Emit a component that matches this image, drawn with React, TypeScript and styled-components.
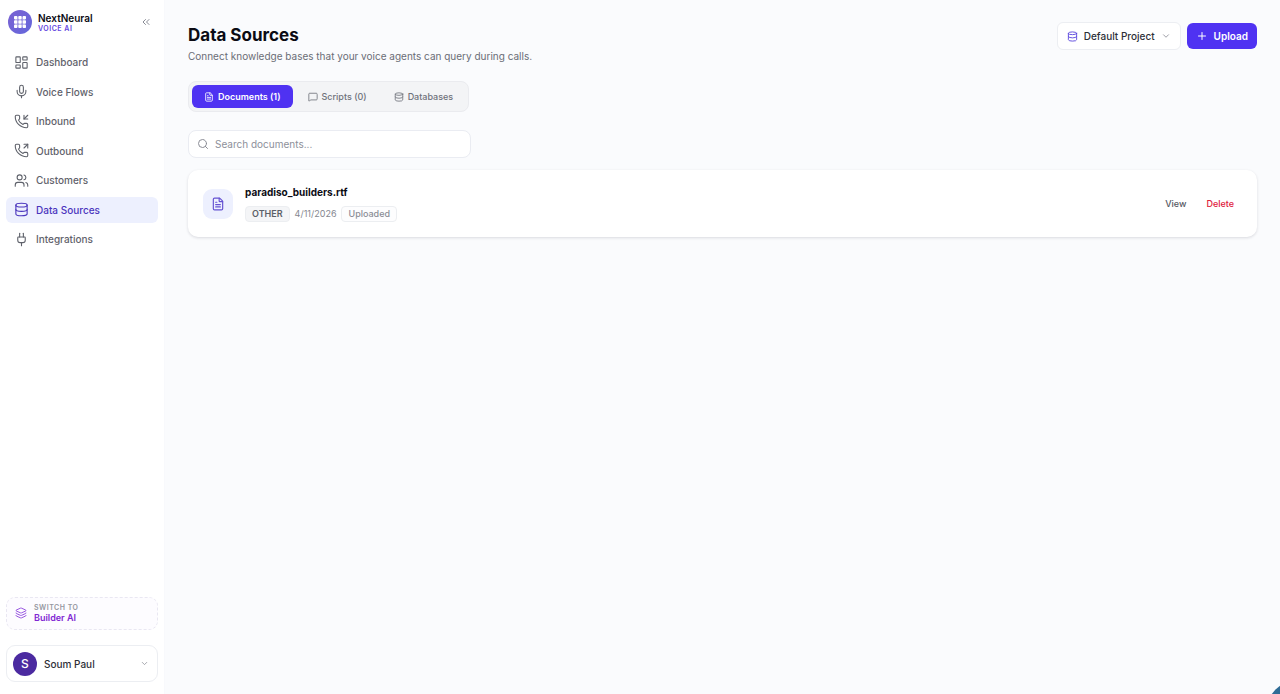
import React from "react";
import styled, { createGlobalStyle, css } from "styled-components";
import {
  ChevronDown,
  ChevronsLeft,
  Database,
  FileText,
  Layers,
  LayoutDashboard,
  MessageSquare,
  Mic,
  PhoneIncoming,
  PhoneOutgoing,
  Plug,
  Plus,
  Search,
  Users,
} from "lucide-react";

const GlobalStyle = createGlobalStyle`
  *, *::before, *::after { box-sizing: border-box; }
  body {
    margin: 0;
    background: #fafbfd;
    color: #0b0b14;
    font-family: Inter, "Liberation Sans", sans-serif;
    font-size: 10px;
    line-height: 16px;
  }
  button, input, select { font: inherit; color: inherit; margin: 0; }
  button { cursor: pointer; }
  a { color: inherit; text-decoration: none; }
  h1, h2, p, ul { margin: 0; padding: 0; }
  svg { flex: none; display: block; }
`;

const Shell = styled.div`
  display: flex;
  min-height: 100vh;
`;

const Sidebar = styled.aside`
  display: flex;
  flex-direction: column;
  flex: 0 0 165px;
  padding: 8px 6px 12px;
  background: #fff;
  border-right: 1px solid #f8f9fc;
`;

const Brand = styled.div`
  display: flex;
  align-items: center;
  gap: 6px;
  height: 28px;
  padding: 0 6px 0 2px;
`;

const BrandMark = styled.span`
  display: grid;
  place-items: center;
  width: 24px;
  height: 24px;
  border-radius: 50%;
  background: linear-gradient(135deg, #7b62d2, #6467dc);
`;

const BrandText = styled.div`
  flex: 1;
  display: flex;
  flex-direction: column;
  padding-top: 1px;
`;

const BrandName = styled.span`
  font-weight: 600;
  line-height: 12px;
`;

const BrandProduct = styled.span`
  color: #6446e0;
  font-size: 7px;
  font-weight: 600;
  line-height: 9px;
  letter-spacing: 0.5px;
`;

const IconButton = styled.button`
  display: grid;
  place-items: center;
  padding: 0;
  width: 12px;
  height: 12px;
  border: 0;
  background: none;
  color: #888b95;
`;

const NavList = styled.ul`
  display: flex;
  flex-direction: column;
  justify-content: space-between;
  height: 203px;
  margin-top: 13px;
  list-style: none;
`;

const NavLink = styled.a<{ $active?: boolean }>`
  display: flex;
  align-items: center;
  gap: 7px;
  height: 26px;
  padding: 0 8px;
  border-radius: 6px;
  font-weight: 500;
  color: ${(p) => (p.$active ? "#4a35bd" : "#5f626b")};
  background: ${(p) => (p.$active ? "#edf0fe" : "transparent")};
`;

const SidebarFoot = styled.div`
  display: flex;
  flex-direction: column;
  gap: 15px;
  margin-top: auto;
`;

const SwitchLink = styled.a`
  display: flex;
  align-items: center;
  gap: 7px;
  height: 33px;
  padding: 0 8px 1px;
  border: 1px dashed #e9e7f2;
  border-radius: 9px;
  background: #fdfcff;
  color: #8a3fdc;
`;

const SwitchText = styled.span`
  display: flex;
  flex-direction: column;
  font-size: 9px;
  font-weight: 600;
  line-height: 11px;
  color: #8126d3;
`;

const SwitchHint = styled.span`
  font-size: 7px;
  font-weight: 600;
  line-height: 9px;
  letter-spacing: 0.5px;
  color: #9597a0;
`;

const UserButton = styled.button`
  display: flex;
  align-items: center;
  gap: 7px;
  height: 37px;
  padding: 0 8px 0 6px;
  border: 1px solid #eceef2;
  border-radius: 9px;
  background: #fff;
  color: #2d2f37;
  font-weight: 500;
  text-align: left;
`;

const Avatar = styled.span`
  display: grid;
  place-items: center;
  width: 24px;
  height: 24px;
  border-radius: 50%;
  background: #4b2aa0;
  color: #fff;
  font-size: 12px;
`;

const UserName = styled.span`
  flex: 1;
`;

const Main = styled.main`
  flex: 1;
  min-width: 0;
  padding: 22px 23px 24px;
`;

const Header = styled.header`
  display: flex;
  justify-content: space-between;
  align-items: flex-start;
`;

const Title = styled.h1`
  font-size: 17px;
  font-weight: 700;
  line-height: 26px;
`;

const Subtitle = styled.p`
  color: #6a6d76;
`;

const Actions = styled.div`
  display: flex;
  align-items: center;
  gap: 6px;
`;

const ProjectPicker = styled.label`
  display: flex;
  align-items: center;
  gap: 6px;
  height: 28px;
  padding: 0 9px;
  border: 1px solid #eceef2;
  border-radius: 6px;
  background: #fff;
  color: #5b46dd;
`;

const ProjectSelect = styled.select`
  appearance: none;
  field-sizing: content;
  padding: 0;
  border: 0;
  background: none;
  color: #2d2f37;
  font-weight: 500;
`;

const Muted = styled.span`
  color: #8b8d96;
`;

const UploadButton = styled.button`
  display: flex;
  align-items: center;
  gap: 6px;
  height: 26px;
  padding: 0 9px;
  border: 0;
  border-radius: 6px;
  background: #4f32f2;
  color: #fff;
  font-weight: 600;
`;

const Tabs = styled.div`
  display: flex;
  gap: 3px;
  width: fit-content;
  margin-top: 17px;
  padding: 3px;
  border: 1px solid #eaebef;
  border-radius: 8px;
  background: #f3f4f6;
`;

const Tab = styled.button<{ $active?: boolean }>`
  display: flex;
  align-items: center;
  gap: 4px;
  height: 23px;
  padding: 0 12px;
  border: 0;
  border-radius: 6px;
  background: none;
  color: #6f727b;
  font-size: 9px;
  font-weight: 500;
  ${(p) =>
    p.$active &&
    css`
      background: #4f32f2;
      color: #fff;
      font-weight: 600;
    `}
`;

const SearchBox = styled.label`
  display: flex;
  align-items: center;
  gap: 6px;
  width: 283px;
  max-width: 100%;
  height: 28px;
  margin-top: 18px;
  padding: 0 8px;
  border: 1px solid #eaecf2;
  border-radius: 8px;
  background: #fff;
  color: #8b8d96;
`;

const SearchInput = styled.input`
  flex: 1;
  min-width: 0;
  padding: 0;
  border: 0;
  outline: 0;
  background: none;
  color: #2d2f37;
  &::placeholder {
    color: #8d909a;
    opacity: 1;
  }
`;

const DocumentCard = styled.article`
  display: flex;
  align-items: center;
  gap: 12px;
  min-height: 67px;
  margin-top: 12px;
  padding: 14px 15px;
  border-radius: 10px;
  background: #fff;
  box-shadow: 0 1px 3px rgba(20, 24, 40, 0.14);
`;

const DocumentIcon = styled.span`
  display: grid;
  place-items: center;
  width: 30px;
  height: 30px;
  border-radius: 9px;
  background: #edf0fe;
  color: #6552d2;
`;

const DocumentInfo = styled.div`
  flex: 1;
  min-width: 0;
`;

const DocumentName = styled.h2`
  font-size: 10px;
  font-weight: 700;
  line-height: 14px;
`;

const DocumentMeta = styled.div`
  display: flex;
  align-items: center;
  gap: 5px;
  margin-top: 7px;
  color: #85878f;
  font-size: 9px;
`;

const Tag = styled.span<{ $filled?: boolean }>`
  height: 16px;
  padding: 0 6px;
  border: 1px solid #eceef1;
  border-radius: 4px;
  line-height: 14px;
  font-weight: ${(p) => (p.$filled ? 600 : 500)};
  background: ${(p) => (p.$filled ? "#f4f5f7" : "#fdfdfe")};
  color: ${(p) => (p.$filled ? "#5c5f68" : "#8b8d96")};
`;

const TextButton = styled.button<{ $danger?: boolean }>`
  padding: 4px 8px;
  border: 0;
  background: none;
  font-size: 9px;
  font-weight: 500;
  color: ${(p) => (p.$danger ? "#e0203c" : "#565963")};
`;

const RowActions = styled.div`
  display: flex;
  gap: 4px;
`;

const HelpBubble = styled.div`
  position: fixed;
  right: -45px;
  bottom: -45px;
  width: 58px;
  height: 58px;
  border-radius: 50%;
  background: #2f6c96;
`;

const navItems = [
  { label: "Dashboard", icon: LayoutDashboard },
  { label: "Voice Flows", icon: Mic },
  { label: "Inbound", icon: PhoneIncoming },
  { label: "Outbound", icon: PhoneOutgoing },
  { label: "Customers", icon: Users },
  { label: "Data Sources", icon: Database, active: true },
  { label: "Integrations", icon: Plug },
];

const tabs = [
  { label: "Documents (1)", icon: FileText, active: true },
  { label: "Scripts (0)", icon: MessageSquare },
  { label: "Databases", icon: Database },
];

function DotGrid() {
  return (
    <svg width="14" height="14" viewBox="0 0 14 14" fill="#fff" aria-hidden="true">
      {[1, 5.3, 9.6].map((y) =>
        [1, 5.3, 9.6].map((x) => (
          <rect key={`${x}-${y}`} x={x} y={y} width="3.4" height="3.4" rx="0.8" />
        )),
      )}
      <path
        d="M2 4.85h10M2 9.15h10M4.85 2v10M9.15 2v10"
        stroke="#fff"
        strokeOpacity="0.3"
        strokeWidth="0.9"
      />
    </svg>
  );
}

export default function App() {
  return (
    <>
      <GlobalStyle />
      <Shell>
        <Sidebar>
          <Brand>
            <BrandMark>
              <DotGrid />
            </BrandMark>
            <BrandText>
              <BrandName>NextNeural</BrandName>
              <BrandProduct>VOICE AI</BrandProduct>
            </BrandText>
            <IconButton type="button" aria-label="Collapse sidebar">
              <ChevronsLeft size={12} />
            </IconButton>
          </Brand>
          <nav>
            <NavList>
              {navItems.map(({ label, icon: Icon, active }) => (
                <li key={label}>
                  <NavLink href="#" $active={active}>
                    <Icon size={15} strokeWidth={1.75} />
                    {label}
                  </NavLink>
                </li>
              ))}
            </NavList>
          </nav>
          <SidebarFoot>
            <SwitchLink href="#">
              <Layers size={12} strokeWidth={1.75} />
              <SwitchText>
                <SwitchHint>SWITCH TO</SwitchHint>
                Builder AI
              </SwitchText>
            </SwitchLink>
            <UserButton type="button">
              <Avatar>S</Avatar>
              <UserName>Soum Paul</UserName>
              <Muted>
                <ChevronDown size={9} />
              </Muted>
            </UserButton>
          </SidebarFoot>
        </Sidebar>
        <Main>
          <Header>
            <div>
              <Title>Data Sources</Title>
              <Subtitle>
                Connect knowledge bases that your voice agents can query during calls.
              </Subtitle>
            </div>
            <Actions>
              <ProjectPicker>
                <Database size={11} />
                <ProjectSelect aria-label="Project">
                  <option>Default Project</option>
                </ProjectSelect>
                <Muted>
                  <ChevronDown size={10} />
                </Muted>
              </ProjectPicker>
              <UploadButton type="button">
                <Plus size={12} />
                Upload
              </UploadButton>
            </Actions>
          </Header>
          <Tabs role="tablist">
            {tabs.map(({ label, icon: Icon, active }) => (
              <Tab key={label} type="button" role="tab" aria-selected={!!active} $active={active}>
                <Icon size={10} />
                {label}
              </Tab>
            ))}
          </Tabs>
          <SearchBox>
            <Search size={12} />
            <SearchInput type="text" placeholder="Search documents..." aria-label="Search documents" />
          </SearchBox>
          <DocumentCard>
            <DocumentIcon>
              <FileText size={14} />
            </DocumentIcon>
            <DocumentInfo>
              <DocumentName>paradiso_builders.rtf</DocumentName>
              <DocumentMeta>
                <Tag $filled>OTHER</Tag>
                <span>4/11/2026</span>
                <Tag>Uploaded</Tag>
              </DocumentMeta>
            </DocumentInfo>
            <RowActions>
              <TextButton type="button">View</TextButton>
              <TextButton type="button" $danger>
                Delete
              </TextButton>
            </RowActions>
          </DocumentCard>
        </Main>
      </Shell>
      <HelpBubble aria-hidden="true" />
    </>
  );
}
